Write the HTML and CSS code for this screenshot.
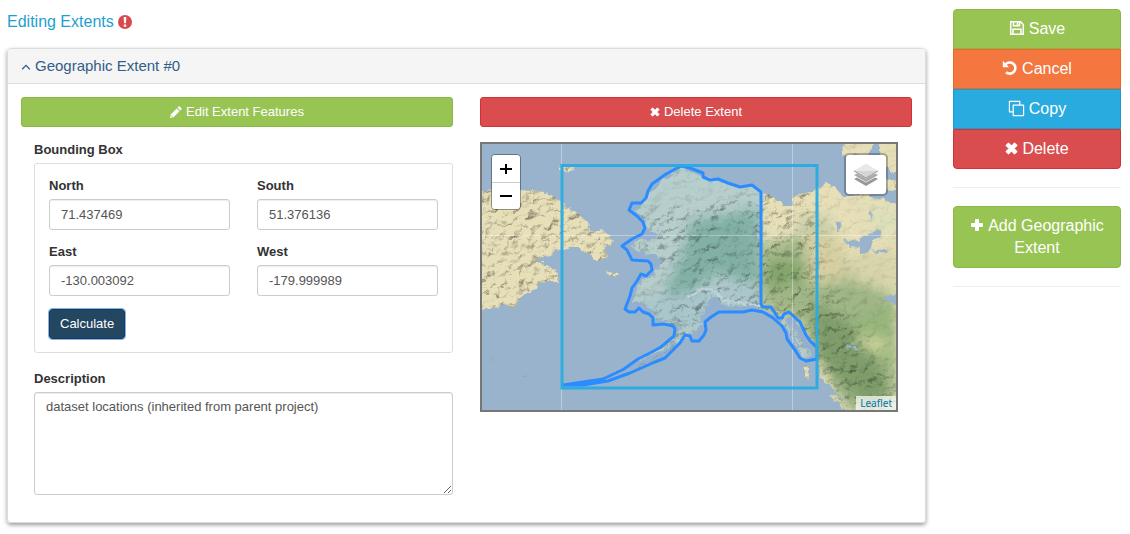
FILE: index.html
```html
<!DOCTYPE html>
<html lang="en">
<head>
<meta charset="utf-8">
<title>Editing Extents</title>
<link rel="stylesheet" href="styles.css">
</head>
<body>
<div class="page">
  <main class="content">
    <h1 class="title"><a href="#">Editing Extents</a>
      <svg class="alert" viewBox="0 0 14 14" role="img" aria-label="Required"><circle cx="7" cy="7" r="7" fill="#d9494c"/><path d="M5.700 2h2.600L8 8.300H6zM5.800 9.400h2.400v2.400H5.800z" fill="#fff"/></svg>
    </h1>
    <section class="panel">
      <header class="panel-head">
        <a href="#" class="toggle">
          <svg class="chevron" viewBox="0 0 10 8" aria-hidden="true"><path d="M1.200 6.200 5 2.400l3.800 3.800" fill="none" stroke="currentColor" stroke-width="1.300"/></svg>Geographic Extent #0</a>
      </header>
      <div class="panel-body">
        <div class="column">
          <button type="button" class="btn green"><svg class="icon-sm" viewBox="0 0 12 12" aria-hidden="true"><path d="M8.600.6q.6-.6 1.200 0l1.600 1.600q.6.600 0 1.200L10.200 4.600 7.400 1.800zM6.700 2.500l2.800 2.800-6 6L0 12l.7-3.500zM1.600 9.100l-.3 1.600 1.600-.3z" fill="currentColor" fill-rule="evenodd"/></svg>Edit Extent Features</button>
          <div class="fields">
            <div class="caption" id="bbox">Bounding Box</div>
            <div class="bounds" role="group" aria-labelledby="bbox">
              <div class="field"><label for="north">North</label><input id="north" type="text" value="71.437469"></div>
              <div class="field"><label for="south">South</label><input id="south" type="text" value="51.376136"></div>
              <div class="field"><label for="east">East</label><input id="east" type="text" value="-130.003092"></div>
              <div class="field"><label for="west">West</label><input id="west" type="text" value="-179.999989"></div>
              <button type="button" class="btn calculate">Calculate</button>
            </div>
            <label class="caption" for="description">Description</label>
            <textarea id="description">dataset locations (inherited from parent project)</textarea>
          </div>
        </div>
        <div class="column">
          <button type="button" class="btn red"><svg class="icon-x" viewBox="0 0 12 12" aria-hidden="true"><path d="M1 3.200 3.200 1 6 3.800 8.800 1 11 3.200 8.200 6 11 8.800 8.800 11 6 8.200 3.200 11 1 8.800 3.800 6z" fill="currentColor" stroke="currentColor" stroke-linejoin="round"/></svg>Delete Extent</button>
          <div class="map">
            <svg class="terrain" viewBox="482 144 414 266" preserveAspectRatio="xMidYMid slice" role="img" aria-label="Map of Alaska">
              <defs>
                <filter id="coast" x="0" y="0" width="100%" height="100%" color-interpolation-filters="sRGB"><feTurbulence type="fractalNoise" baseFrequency=".15" numOctaves="3" seed="4"/><feDisplacementMap in="SourceGraphic" scale="7" xChannelSelector="R" yChannelSelector="G"/></filter>
                <filter id="soft" x="-50%" y="-50%" width="200%" height="200%" color-interpolation-filters="sRGB"><feGaussianBlur stdDeviation="6"/></filter>
                <filter id="relief" x="0" y="0" width="100%" height="100%" color-interpolation-filters="sRGB">
                  <feTurbulence type="fractalNoise" baseFrequency=".09 .13" numOctaves="4" seed="12" result="n"/>
                  <feColorMatrix in="n" values="0 0 0 0 0 0 0 0 0 0 0 0 0 0 0 1 0 0 0 0" result="h"/>
                  <feDiffuseLighting in="h" surfaceScale="2.400" diffuseConstant="1.180" lighting-color="#fff"><feDistantLight azimuth="225" elevation="60"/></feDiffuseLighting>
                </filter>
                <mask id="rugged" maskUnits="userSpaceOnUse" x="476" y="138" width="426" height="278">
                  <rect x="476" y="138" width="426" height="278" fill="#ddd"/>
                  <g filter="url(#soft)" fill="#333">
                    <path d="M650 170 700 170 755 190 740 200 680 206 645 212z"/>
                    <path d="M815 180 905 200V385L870 350 850 310 825 280z"/>
                    <path d="M640 275 680 262 700 290 660 315 635 300z" fill="#666"/>
                    <path d="M720 215 755 215 755 280 720 262z" fill="#888"/>
                    <path d="M840 140H905V180H840z"/>
                  </g>
                </mask>
                <path id="siberia" d="M480 193 497 188 520 189 540 191 553 196 565 206 578 215 588 223 589 229 596 231 602 229 608 235 613 241 606 246 606 256 600 261 594 260 589 254 582 250 575 247 568 249 560 250 545 256 535 260 548 266 555 271 558 282 545 282 532 289 520 299 512 309 505 304 496 308 480 311zM556 171 565 166 575 168 568 172zM604 271 618 274 615 277z"/>
                <path id="alaska" d="M681 167 703 177 718 180 740 188 752 186 763 193V307L771 310 786 318 798 335 812 353 806 359 797 348 788 330 773 315 754 306 735 307 720 304 718 297 704 307 708 317 693 333 675 343 652 355 628 367 610 374 635 362 661 348 676 336 679 327 665 323 656 319 654 312 640 303 632 303 637 291 641 280 654 275 660 266 658 256 640 252 632 247 640 239 655 239 661 234 646 230 645 220 635 211 643 205 649 194 660 182z"/>
                <path id="canada" d="M762 192 774 198 785 206 792 207 792 197 805 193 817 190 828 181 835 189 845 197 862 193 876 198 900 205V416H852L847 403 833 390 822 380 817 360 814 348 804 332 792 316 779 318 771 309H761z"/>
                <path id="islands" d="M846 140H875L868 156 854 155 841 156zM878 140H900V176L889 171 882 159zM882 179 900 181V190L889 190zM802 365 807 366 810 381 805 377zM828 394 838 396 850 406 850 411 842 408z"/>
                <clipPath id="land"><use href="#siberia"/><use href="#alaska"/><use href="#canada"/><use href="#islands"/></clipPath>
              </defs>
              <rect x="482" y="144" width="414" height="266" fill="#99b3cc"/>
              <g filter="url(#coast)">
                <rect x="476" y="138" width="426" height="278" fill="#99b3cc"/>
                <g clip-path="url(#land)">
                  <rect x="476" y="138" width="426" height="278" fill="#e6dfb8"/>
                  <use href="#alaska" fill="#bdd2ca"/>
                  <g filter="url(#soft)">
                    <path d="M690 222 758 208 759 285 715 274 675 308 660 302 682 255z" fill="#86b3a1"/>
                    <path d="M640 300 690 292 720 284 761 290 762 310 650 340z" fill="#afcac9"/>
                    <path d="M762 245 808 233 840 260 896 300V410H845L800 322 762 307z" fill="#a0b686"/>
                    <path d="M763 262H802L806 280 765 290z" fill="#83a56b"/>
                    <path d="M795 218 829 215 835 258 805 251z" fill="#c6cda6"/>
                    <path d="M813 304 861 326 890 390 870 410 815 359z" fill="#7f9d6b"/>
                    <path d="M848 322 896 300V385L880 358z" fill="#97b57c"/>
                    <path d="M803 235H840L848 280 810 285z" fill="#d6cfa2"/>
                    <path d="M845 255 900 249V294L854 282z" fill="#d8d5aa"/>
                    <path d="M856 334 888 339 885 354 862 350z" fill="#ccd49c"/>
                    <path d="M860 205 900 210 900 238 872 226z" fill="#dbe0bb"/>
                  </g>
                  <g class="shade" mask="url(#rugged)"><rect x="476" y="138" width="426" height="278" filter="url(#relief)"/></g>
                  <path d="M688 299 703 288 716 292 723 300 762 306" fill="none" stroke="#d7e4e8" stroke-width="3" opacity=".6"/>
                </g>
                <g fill="#99b3cc">
                  <path d="M843 239 858 241 864 235 880 230 881 237 873 240 868 253 861 254 861 247 850 246zM888 297 900 292V305L884 300zM838 221 841 225 838 232zM870 251 885 249 888 253zM869 208 873 216 870 219z"/>
                  <path d="M700 323 708 302 718 296 714 307 705 321zM648 257 661 258 659 268 651 273z"/>
                </g>
                <path d="M788 320 799 349M793 322 808 353M795 336 805 334M799 346 811 344M846 345 856 349 853 341" fill="none" stroke="#99b3cc" stroke-width="2"/>
                <path d="M490 357 494 361M524 376H528M634 369 644 364 653 360 665 352 675 345" fill="none" stroke="#8aa397" stroke-width="1"/>
              </g>
              <path d="M561.500 144V410M792.500 144V410M482 235.500H896" fill="none" stroke="#fff" stroke-opacity=".35"/>
              <path d="M681 166 666 174 652 184 648 191 646 198 641 203H632L629 210 637 216 643 222 645 228 642 234 632 239 622 246 627 250 632 260 648 261 651 264 652 270 646 276 641 274 637 281 632 288 630 296 625 309 629 312H635L639 308 643 312 649 314 653 318V325L664 324 673 326 675 329 674 336 668 341 661 347 650 353 638 359 624 369 603 379 563 385 583 385 608 381 630 373 655 362 665 358 680 343 685 335 690 336 692 341H699L704 335 706 330 705 322 711 317 719 312H743L752 310 763 312 773 318 782 326 786 333 787 339 795 350 800 358 806 361 817 359V347L810 341 806 335 800 322 789 312 784 314 782 318H778L775 313 771 307H763L761 304V192L752 185 740 187 728 183 718 179 710 180 703 177V173L690 168z" fill="#3388ff" fill-opacity=".05" stroke="#2b8cff" stroke-width="3" stroke-linejoin="round"/>
              <rect x="562" y="165.500" width="255" height="222.500" fill="none" stroke="#29abe2" stroke-width="3" stroke-opacity=".95"/>
            </svg>
            <div class="zoom">
              <button type="button" aria-label="Zoom in"><svg viewBox="0 0 12 12" aria-hidden="true"><path d="M6 1v10M0 6h12" stroke="#000" stroke-width="2"/></svg></button>
              <button type="button" aria-label="Zoom out"><svg viewBox="0 0 12 12" aria-hidden="true"><path d="M0 6h12" stroke="#000" stroke-width="2"/></svg></button>
            </div>
            <button type="button" class="layers" aria-label="Layers"><svg viewBox="0 0 26 26" aria-hidden="true"><path d="m1 17 12 7 12-7-3-1.500-9 5-9-5z" fill="#999"/><path d="m1 13 12 7 12-7-3-1.500-9 5-9-5z" fill="#aaa"/><path d="m1 9 12-7 12 7-12 7z" fill="#d5d5d5"/><path d="m1 9 12-7 12 7z" fill="#e8e8e8"/><path d="m1 9 12 7 12-7" fill="none" stroke="#999"/></svg></button>
            <a class="credit" href="#">Leaflet</a>
          </div>
        </div>
      </div>
    </section>
  </main>
  <aside class="side">
    <div class="stack">
      <button type="button" class="btn large green"><svg class="icon" viewBox="0 0 16 16" aria-hidden="true"><path d="M1.700 1.700h9.800l2.800 2.800v9.800H1.700zM4.500 1.700v4h6v-4M4 14V9.200h8V14M8.500 2v3" fill="none" stroke="currentColor" stroke-width="1.500"/></svg>Save</button>
      <button type="button" class="btn large orange"><svg class="icon" viewBox="0 0 16 16" aria-hidden="true"><path d="M3.200 4.800A5.600 5.600 0 1 1 4 12.200" fill="none" stroke="currentColor" stroke-width="2.600"/><path d="M.8.8V7.200h6.200z" fill="currentColor"/></svg>Cancel</button>
      <button type="button" class="btn large blue"><svg class="icon-copy" viewBox="0 0 18 18" aria-hidden="true"><path d="M5.500 5.500h11v11h-11zM12.500 5V1.500h-11v11H5" fill="none" stroke="currentColor" stroke-width="1.300" stroke-linejoin="round"/></svg>Copy</button>
      <button type="button" class="btn large red"><svg class="icon-cross" viewBox="0 0 12 12" aria-hidden="true"><path d="M1 3.200 3.200 1 6 3.800 8.800 1 11 3.200 8.200 6 11 8.800 8.800 11 6 8.200 3.200 11 1 8.800 3.800 6z" fill="currentColor" stroke="currentColor" stroke-linejoin="round"/></svg>Delete</button>
    </div>
    <hr>
    <button type="button" class="btn large add green"><svg class="icon-plus" viewBox="0 0 14 14" aria-hidden="true"><path d="M5.500 1.500h3v4h4v3h-4v4h-3v-4h-4v-3h4z" fill="currentColor" stroke="currentColor" stroke-linejoin="round"/></svg>Add Geographic Extent</button>
    <hr>
  </aside>
</div>
</body>
</html>
```
FILE: styles.css
```css
* { box-sizing: border-box; }
body { margin: 0; background: #fff; color: #333; font: 13px/18px "Liberation Sans", Arial, sans-serif; }
button, input, textarea { font: inherit; }
a { color: #1e9fd2; text-decoration: none; }
.page { display: grid; grid-template-columns: minmax(0, 1fr) 168px; gap: 27px; padding: 9px 9px 11px 7px; }
.title { margin: 0; padding: 1px 0 14px; font-size: 16px; font-weight: 400; line-height: 24px; }
.alert { width: 14px; height: 14px; vertical-align: -2px; }
.panel { border: 1px solid #ddd; border-radius: 4px; box-shadow: 0 2px 4px rgba(0, 0, 0, .4); }
.panel-head { padding: 8px 13px; background: #f5f5f5; border-bottom: 1px solid #ddd; border-radius: 3px 3px 0 0; font-size: 15px; }
.toggle { color: #325d88; }
.chevron { width: 10px; height: 8px; margin-right: 4px; }
.panel-body { display: grid; grid-template-columns: repeat(2, minmax(0, 1fr)); gap: 27px; padding: 13px 13px 27px; }
.btn { display: block; width: 100%; padding: 5px 10px; border: 1px solid; border-radius: 3px; color: #fff; text-align: center; }
.btn svg { margin-right: 4px; }
.green { background: #98c454; border-color: #8ab846; }
.orange { background: #f4773f; border-color: #f26522; }
.blue { background: #29abe0; border-color: #1b9bd0; }
.red { background: #d94d4f; border-color: #d03238; }
.icon-sm { width: 12px; height: 12px; vertical-align: -2px; }
.icon-x { width: 10px; height: 10px; vertical-align: -1px; }
.fields { margin: 14px 0 0 13px; }
.caption, .field label { display: block; margin-bottom: 4px; font-weight: 700; }
.bounds { display: grid; grid-template-columns: repeat(2, minmax(0, 1fr)); gap: 13px 27px; margin-bottom: 17px; padding: 13px 14px; border: 1px solid #ddd; border-radius: 3px; }
input, textarea { display: block; width: 100%; padding: 5px 11px; border: 1px solid #ccc; border-radius: 3px; background: #fff; color: #555; box-shadow: inset 0 1px 1px rgba(0, 0, 0, .075); }
input { height: 31px; }
textarea { height: 103px; resize: vertical; }
.calculate { justify-self: start; width: auto; background: #234661; border-color: #1b3a52; outline: 1px solid #83b3f3; }
.map { position: relative; height: 270px; margin: 15px 14px 0 0; border: 2px solid #777; overflow: hidden; }
.terrain { display: block; width: 100%; height: 100%; }
.shade { mix-blend-mode: multiply; }
.zoom { position: absolute; top: 10px; left: 9px; border: 1px solid rgba(0, 0, 0, .35); border-radius: 4px; overflow: hidden; }
.zoom button { display: grid; place-items: center; width: 28px; height: 27px; padding: 0; border: 0; background: #fff; }
.zoom button + button { border-top: 1px solid #ccc; }
.zoom svg { width: 12px; height: 12px; }
.layers { position: absolute; top: 9px; right: 8px; display: grid; place-items: center; width: 44px; height: 43px; padding: 0; border: 2px solid rgba(0, 0, 0, .25); border-radius: 5px; background: #fff; background-clip: padding-box; }
.layers svg { width: 26px; height: 26px; margin: 0; }
.credit { position: absolute; right: 0; bottom: 0; padding: 0 4px; background: rgba(255, 255, 255, .7); color: #0078a8; font: 10px/14px "Noto Sans", sans-serif; }
.large { padding: 8px 12px; font-size: 16px; line-height: 22px; }
.stack { display: grid; grid-auto-rows: 40px; }
.stack .btn { padding: 7px 12px; border-radius: 0; }
.stack .btn:first-child { border-radius: 4px 4px 0 0; }
.stack .btn:last-child { border-radius: 0 0 4px 4px; }
.icon { width: 16px; height: 16px; vertical-align: -2px; }
.icon-copy { width: 17px; height: 17px; vertical-align: -3px; }
.icon-cross { width: 13px; height: 13px; vertical-align: -1px; }
.icon-plus { width: 14px; height: 14px; vertical-align: -1px; }
.add { border-radius: 4px; }
hr { margin: 18px 0; border: 0; border-top: 1px solid #eee; }
```
